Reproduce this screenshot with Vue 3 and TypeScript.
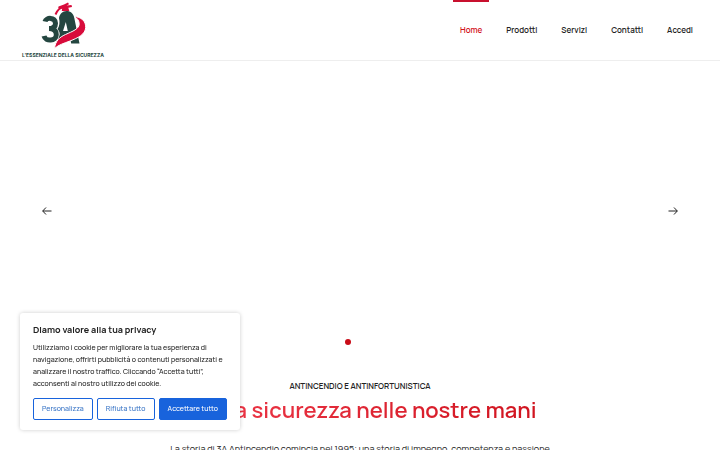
<script setup lang="ts">
import { ref } from 'vue'

interface NavItem {
  label: string
  href: string
}

const items: NavItem[] = [
  { label: 'Home', href: '#home' },
  { label: 'Prodotti', href: '#prodotti' },
  { label: 'Servizi', href: '#servizi' },
  { label: 'Contatti', href: '#contatti' },
  { label: 'Accedi', href: '#accedi' },
]
const active = ref('Home')
const consentOpen = ref(true)
</script>

<template>
  <div class="page">
    <header class="header">
      <a class="logo" href="#home">
        <svg class="mark" viewBox="0 0 46 48" aria-hidden="true">
          <path class="three" d="M5 19.500C6 15.300 15.500 14.800 15.500 21.300c0 3.700-2.500 5.300-6.500 5.300 4.500 0 7.300 2 7.300 6.100 0 6.600-10.800 7.300-12.300 1.300" />
          <path class="green" d="M19 16c.7-4 3.500-7 7.500-7 4.300 0 6.700 2.500 7.700 6.500L39.500 41.500h-8.300l-1.500-7-10.200 5-1.500-1 1.700-6c0-2.500-.7-4-2.200-5.500 2-2.500 2.500-7 1.500-11z" />
          <path class="gap" d="M25.800 20 23 29h4.800z" />
          <path class="swoosh" d="M34 14.500c7 .3 12 4.500 11.700 11-.4 7-7.700 10.300-15.700 13.500-6 2.400-11 3.500-15.500 7.500 1-7.500 4.500-11 11-14 7-3.200 14-5.500 13.700-11-.2-3-2-5.500-5.200-7z" />
          <path class="hose" d="M23 5.500c-3 0-5.500 2.500-7.500 7" />
          <path class="red" d="m18.500 4.500 5.500-2 4-2 1 1.700L26.500 3.500l5-.5.5 2-3.700.7 1 3.300h-7.500l.4-3-4 .3z" />
        </svg>
        <span class="tagline">L'ESSENZIALE DELLA SICUREZZA</span>
      </a>
      <nav class="nav" aria-label="Principale">
        <a
          v-for="item in items"
          :key="item.label"
          class="nav-link"
          :class="{ active: active === item.label }"
          :href="item.href"
          @click="active = item.label"
        >{{ item.label }}</a>
      </nav>
    </header>

    <main>
      <section class="slider" aria-label="Presentazione">
        <button class="arrow" type="button" aria-label="Precedente">
          <svg viewBox="0 0 10 8" aria-hidden="true"><path d="M4 .5.700 4 4 7.500M.7 4H9.500" /></svg>
        </button>
        <button class="arrow" type="button" aria-label="Successiva">
          <svg viewBox="0 0 10 8" aria-hidden="true"><path d="M6 .5 9.300 4 6 7.500M9.300 4H.5" /></svg>
        </button>
      </section>
      <div class="dots">
        <button class="dot current" type="button" aria-label="Diapositiva 1"></button>
        <button class="dot" type="button" aria-label="Diapositiva 2"></button>
      </div>
      <section class="intro">
        <p class="eyebrow">ANTINCENDIO E ANTINFORTUNISTICA</p>
        <h1>La tua sicurezza nelle nostre mani</h1>
        <p class="story">La storia di 3A Antincendio comincia nel 1995: una storia di impegno, competenza e passione</p>
      </section>
    </main>

    <aside v-if="consentOpen" class="consent" aria-labelledby="consent-title">
      <h2 id="consent-title">Diamo valore alla tua privacy</h2>
      <p>
        Utilizziamo i cookie per migliorare la tua esperienza di<br />
        navigazione, offrirti pubblicità o contenuti personalizzati e<br />
        analizzare il nostro traffico. Cliccando “Accetta tutti”,<br />
        acconsenti al nostro utilizzo dei cookie.
      </p>
      <div class="choices">
        <button class="customize" type="button">Personalizza</button>
        <button class="reject" type="button" @click="consentOpen = false">Rifiuta tutto</button>
        <button class="accept" type="button" @click="consentOpen = false">Accettare tutto</button>
      </div>
    </aside>
  </div>
</template>

<style>
body {
  margin: 0;
  background: #fff;
}
</style>

<style scoped>
.page {
  height: 100vh;
  overflow: hidden;
  color: #222;
  font-family: Manrope, Inter, sans-serif;
}
.header {
  display: flex;
  justify-content: space-between;
  height: 60px;
  padding: 0 20px;
  border-bottom: 1px solid #eee;
}
.logo {
  display: flex;
  flex-direction: column;
  align-items: center;
  min-width: 86px;
  padding-top: 2px;
  text-decoration: none;
}
.mark {
  width: 46px;
  height: 48px;
}
.green {
  fill: #244640;
}
.three {
  fill: none;
  stroke: #244640;
  stroke-width: 5;
}
.gap {
  fill: #fff;
}
.red {
  fill: #d80b3b;
}
.swoosh {
  fill: #d80b3b;
  stroke: #fff;
  stroke-width: 1;
}
.hose {
  fill: none;
  stroke: #d80b3b;
  stroke-width: 2;
}
.tagline {
  color: #244640;
  font: 700 5px/10px Inter, sans-serif;
  white-space: nowrap;
}
.nav {
  display: flex;
  gap: 10px;
}
.nav-link {
  box-sizing: border-box;
  height: 60px;
  padding: 0 7px;
  border-top: 2px solid transparent;
  color: #222;
  font-size: 8px;
  font-weight: 600;
  line-height: 56px;
  text-decoration: none;
}
.nav-link.active {
  border-color: #c8102e;
  color: #d3141c;
}
.slider {
  display: flex;
  align-items: center;
  justify-content: space-between;
  height: 264px;
  padding: 35px 37px 0;
  box-sizing: border-box;
}
.arrow {
  display: flex;
  padding: 5px;
  border: 0;
  background: none;
}
.arrow svg {
  width: 10px;
  height: 8px;
  fill: none;
  stroke: #222;
  stroke-width: 1;
}
.dots {
  display: flex;
  justify-content: center;
  gap: 18px;
  padding-top: 14px;
}
.dot {
  width: 6px;
  height: 6px;
  padding: 0;
  border: 0;
  border-radius: 50%;
  background: transparent;
}
.dot.current {
  background: #c90c18;
}
.intro {
  padding-top: 34px;
  text-align: center;
  white-space: nowrap;
}
.eyebrow {
  margin: 0;
  font-size: 8px;
  font-weight: 600;
  line-height: 14px;
}
h1 {
  margin: 3px 0 0;
  background: linear-gradient(90deg, #ff4c60, #d0141f 75%);
  background-clip: text;
  color: transparent;
  font-size: 22px;
  font-weight: 600;
  line-height: 28px;
}
.story {
  margin: 18px 0 0;
  font-size: 9px;
  font-weight: 400;
  line-height: 14px;
}
.consent {
  position: fixed;
  bottom: 20px;
  left: 20px;
  box-sizing: border-box;
  width: 220px;
  padding: 10px 13px;
  border-radius: 3px;
  background: #fff;
  box-shadow: 0 0 4px #0003;
}
.consent h2 {
  margin: 0;
  font-size: 9px;
  font-weight: 700;
  line-height: 14px;
}
.consent p {
  margin: 5px 0 8px;
  font-size: 7px;
  font-weight: 500;
  line-height: 12px;
  white-space: nowrap;
}
.choices {
  display: flex;
  gap: 4px;
}
.choices button {
  flex: 1 1 auto;
  height: 22px;
  padding: 0 4px;
  border: 1px solid #1863dc;
  border-radius: 2px;
  background: #fff;
  color: #3975c6;
  font: 500 7px/20px Manrope, Inter, sans-serif;
  white-space: nowrap;
}
.choices .accept {
  background: #1863dc;
  color: #fff;
}
</style>
